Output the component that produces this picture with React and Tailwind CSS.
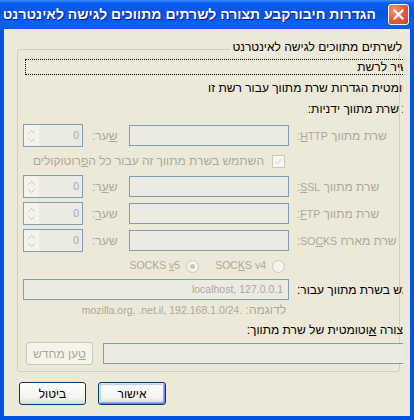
import React from "react";

const grey = "text-[#aca899]";
const latin = "text-[10.5px]";

// RTL line whose start runs past the clip edge at x=403; `hidden` sits out of view
function CutLine({ hidden, cut, children, className = "" }) {
  return (
    <div className={`-mr-[100px] flex whitespace-nowrap ${className}`}>
      <span className={`flex shrink-0 justify-end overflow-hidden ${cut}`}>{hidden}</span>
      {children}
    </div>
  );
}

function Spin() {
  return (
    <div dir="ltr" className="flex h-[23px] w-[60px] border border-[#7f9db9] bg-[#ebebe4]">
      <div className="flex w-[15px] flex-col items-center justify-center gap-[4px] bg-[#f3f2ec]">
        <svg width="7" height="4" viewBox="0 0 7 4">
          <path d="M0.5 3.5 L3.5 0.5 L6.5 3.5" fill="none" stroke="#c9c6b6" strokeWidth="1" />
        </svg>
        <svg width="7" height="4" viewBox="0 0 7 4">
          <path d="M0.5 0.5 L3.5 3.5 L6.5 0.5" fill="none" stroke="#c9c6b6" strokeWidth="1" />
        </svg>
      </div>
      <div className={`flex-1 pr-[3px] text-right leading-[21px] ${latin} ${grey}`}>0</div>
    </div>
  );
}

function ProxyRow({ label, port, className = "" }) {
  return (
    <div className={`flex h-[23px] items-center ${className}`}>
      <div className={`flex w-[106px] shrink-0 justify-end whitespace-nowrap ${grey}`}>{label}</div>
      <div className="mr-[8px] h-[21px] w-[160px] shrink-0 border border-[#7f9db9] bg-[#ebebe4]" />
      <div className={`flex w-[37px] shrink-0 justify-end whitespace-nowrap ${grey}`}>{port}</div>
      <div className="mr-[9px] shrink-0">
        <Spin />
      </div>
    </div>
  );
}

function Radio({ checked }) {
  return (
    <span className="flex h-[13px] w-[13px] shrink-0 items-center justify-center rounded-full border border-[#cac8bb] bg-[#f5f4ef]">
      {checked && <span className="h-[5px] w-[5px] rounded-full bg-[#cac8bb]" />}
    </span>
  );
}

function XpButton({ children, primary, disabled, className = "" }) {
  const look = disabled
    ? "border-[#c9c7ba] bg-[#f5f4ea] text-[#aca899]"
    : "border-[#003c74] bg-[linear-gradient(180deg,#ffffff_0%,#f3f3ef_70%,#dcd8cc_100%)] text-black";
  const ring = primary
    ? "shadow-[inset_1px_1px_0_#cee7ff,inset_-1px_-1px_0_#6982ee,inset_2px_2px_0_#bcd4f6,inset_-2px_-2px_0_#89ade4]"
    : "";
  return (
    <button className={`h-[23px] shrink-0 rounded-[3px] border text-[12px] ${look} ${ring} ${className}`}>
      {children}
    </button>
  );
}

export default function App() {
  return (
    <div className="flex h-[420px] w-[414px] flex-col overflow-hidden bg-[#0054e3] font-['Liberation_Sans','DejaVu_Sans',sans-serif] text-[12px] text-black">
      {/* title bar */}
      <div className="flex h-[29px] shrink-0 items-center justify-end overflow-hidden bg-[linear-gradient(180deg,#3d8cff_0%,#0a5ff0_10%,#0553e6_45%,#0a62f2_85%,#0a5ae8_100%)] pr-[5px]">
        <span dir="rtl" className="whitespace-nowrap text-[14px] font-bold text-white [text-shadow:1px_1px_#0a1b88]">
          הגדרות חיבורקבע תצורה לשרתים מתווכים לגישה לאינטרנט
        </span>
        <div className="ml-[12px] flex h-[21px] w-[21px] shrink-0 items-center justify-center rounded-[3px] border border-white bg-[radial-gradient(circle_at_30%_30%,#f39477_0%,#e2593a_55%,#c8421f_100%)]">
          <svg width="11" height="11" viewBox="0 0 11 11">
            <path d="M1.5 1.5 L9.5 9.5 M9.5 1.5 L1.5 9.5" stroke="white" strokeWidth="2.2" strokeLinecap="square" />
          </svg>
        </div>
      </div>

      {/* dialog body */}
      <div dir="rtl" className="mx-[4px] flex h-[387px] shrink-0 flex-col overflow-hidden bg-[#ece9d8]">
        <div className="ml-[13px] mr-[10px] mt-[20px] h-[323px] shrink-0 rounded-[3px] border border-[#d0d0bf]">
          <div className="-mr-[4px] -mt-[10px] h-[331px] overflow-hidden">
            <CutLine hidden="קבע תצורה" cut="w-[101px] pl-[3px]" className="h-[14px] leading-[14px]">
              <span className="bg-[#ece9d8] pl-[2px]">לשרתים מתווכים לגישה לאינטרנט</span>
            </CutLine>

            <div className="-mr-[20px] ml-[7px] mt-[5px] flex h-[16px] items-center border border-dotted border-black">
              <CutLine hidden="חיבור יש" cut="w-[122px]" className="leading-[14px]">
                <span>יר לרשת</span>
              </CutLine>
            </div>

            <CutLine hidden="זיהוי אוט" cut="w-[101px]" className="mt-[6px] h-[14px] leading-[14px]">
              <span>ומטית הגדרות שרת מתווך עבור רשת זו</span>
            </CutLine>

            <CutLine hidden="תצורת" cut="w-[104px] pl-[3px]" className="mt-[7px] h-[14px] leading-[14px]">
              <span>שרת מתווך ידניות:</span>
            </CutLine>

            <ProxyRow
              className="mt-[8px]"
              label={<span>שרת מתווך <span className={latin}><u>H</u>TTP</span>:</span>}
              port={<span><u>ש</u>ער:</span>}
            />

            <div className="mt-[4px] flex h-[20px] items-center pr-[118px]">
              <span className="flex h-[13px] w-[13px] shrink-0 items-center justify-center border border-[#cac8bb] bg-[#f7f6f1]">
                <svg width="9" height="9" viewBox="0 0 9 9">
                  <path d="M1.5 4.5 L3.5 6.5 L7.5 2" fill="none" stroke="#e2e0d7" strokeWidth="1.3" />
                </svg>
              </span>
              <span className={`mr-[8px] whitespace-nowrap ${grey}`}>
                השתמש בשרת מתווך זה עבור כל ה<u>פ</u>רוטוקולים
              </span>
            </div>

            <ProxyRow
              className="mt-[4px]"
              label={<span>שרת מתווך <span className={latin}><u>S</u>SL</span>:</span>}
              port={<span>ש<u>ע</u>ר:</span>}
            />
            <ProxyRow
              className="mt-[4px]"
              label={<span>שרת מתווך <span className={latin}><u>F</u>TP</span>:</span>}
              port={<span>שע<u>ר</u>:</span>}
            />
            <ProxyRow
              className="mt-[4px]"
              label={<span>שרת מארח <span className={latin}>SO<u>C</u>KS</span>:</span>}
              port={<span>שער:</span>}
            />

            <div className={`mt-[6px] flex h-[16px] items-center whitespace-nowrap pr-[118px] ${latin} ${grey}`}>
              <Radio />
              <span dir="ltr" className="mr-[6px]">SOC<u>K</u>S v4</span>
              <span className="mr-[16px]">
                <Radio checked />
              </span>
              <span dir="ltr" className="mr-[6px]">SOCKS <u>v</u>5</span>
            </div>

            <div className="mt-[5px] flex h-[21px] items-center">
              <div className="flex w-[106px] shrink-0 justify-end whitespace-nowrap">אין להשתמש בשרת מתווך עבור:</div>
              <div className={`mr-[8px] h-[21px] w-[266px] shrink-0 whitespace-nowrap border border-[#7f9db9] bg-[#ebebe4] pr-[5px] leading-[19px] ${latin} ${grey}`}>
                localhost, 127.0.0.1
              </div>
            </div>

            <div className={`mt-[3px] h-[14px] whitespace-nowrap pr-[117px] leading-[14px] ${grey}`}>
              לדוגמה: <span className={latin}>.mozilla.org, .net.il, 192.168.1.0/24</span>
            </div>

            <CutLine hidden="כתובת URL להגדרת ת" cut="w-[100px]" className="mt-[6px] h-[14px] leading-[14px]">
              <span>צורה <u>א</u>וטומטית של שרת מתווך:</span>
            </CutLine>

            <div className="mt-[5px] flex h-[23px] items-center pl-[8px]">
              <div className="-mr-[4px] h-[21px] flex-1 border border-[#7f9db9] bg-[#ebebe4]" />
              <XpButton disabled className="mr-[10px] w-[67px]">
                <u>ט</u>ען מחדש
              </XpButton>
            </div>
          </div>
        </div>

        <div className="mt-[10px] flex justify-end gap-[12px] pl-[15px]">
          <XpButton primary className="w-[68px]">אישור</XpButton>
          <XpButton className="w-[67px]">ביטול</XpButton>
        </div>
      </div>
    </div>
  );
}
